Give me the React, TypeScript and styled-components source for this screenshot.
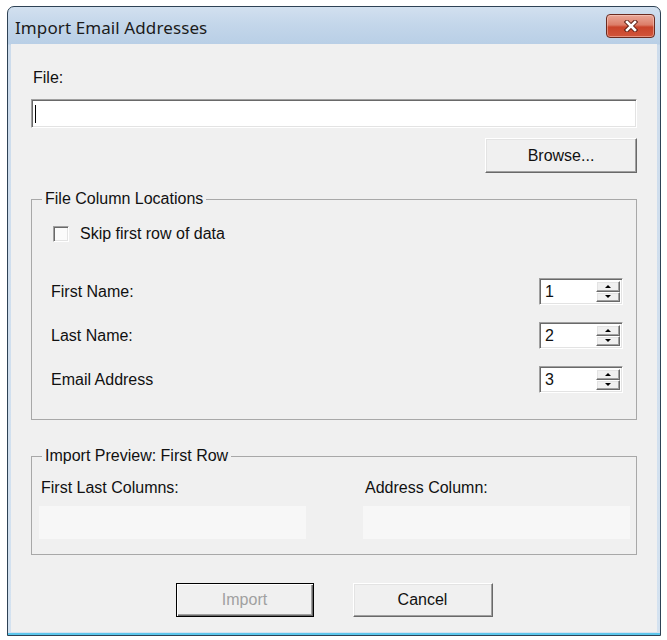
import React from "react";
import styled, { createGlobalStyle } from "styled-components";

const GlobalStyle = createGlobalStyle`
  html, body {
    margin: 0;
    padding: 0;
    background: #ffffff;
  }
  body {
    font-family: "Liberation Sans", Arial, sans-serif;
    color: #111111;
  }
`;

const fieldRows = [
  { label: "First Name:", value: "1" },
  { label: "Last Name:", value: "2" },
  { label: "Email Address", value: "3" },
];

const App = () => {
  return (
    <Page>
      <GlobalStyle />
      <Window>
        <TitleBar>
          <Title>Import Email Addresses</Title>
          <CloseButton>
            <svg width="16" height="12" viewBox="0 0 16 12">
              <path d="M4 2 L12 10 M12 2 L4 10" stroke="#5b1d12" strokeWidth="4.5" strokeLinecap="square" />
              <path d="M4 2 L12 10 M12 2 L4 10" stroke="#ffffff" strokeWidth="2.6" strokeLinecap="square" />
            </svg>
          </CloseButton>
        </TitleBar>
        <Client>
          <FileLabel>File:</FileLabel>
          <TextField>
            <Caret />
          </TextField>
          <BrowseButton>Browse...</BrowseButton>

          <GroupBox $top={16}>
            <Legend>File Column Locations</Legend>
            <GroupBody $pad="17px 13px 26px 19px">
              <CheckRow>
                <CheckBox />
                <span>Skip first row of data</span>
              </CheckRow>
              <FieldList>
                {fieldRows.map((row) => (
                  <FieldRow key={row.label}>
                    <span>{row.label}</span>
                    <SpinBox>
                      <SpinValue>{row.value}</SpinValue>
                      <SpinButtons>
                        <SpinButton>
                          <ArrowUp />
                        </SpinButton>
                        <SpinButton>
                          <ArrowDown />
                        </SpinButton>
                      </SpinButtons>
                    </SpinBox>
                  </FieldRow>
                ))}
              </FieldList>
            </GroupBody>
          </GroupBox>

          <GroupBox $top={26}>
            <Legend>Import Preview: First Row</Legend>
            <GroupBody $pad="12px 6px 15px 7px">
              <PreviewGrid>
                <PreviewColumn>
                  <PreviewLabel>First Last Columns:</PreviewLabel>
                  <PreviewBox />
                </PreviewColumn>
                <PreviewColumn>
                  <PreviewLabel>Address Column:</PreviewLabel>
                  <PreviewBox />
                </PreviewColumn>
              </PreviewGrid>
            </GroupBody>
          </GroupBox>

          <ButtonRow>
            <DialogButton $width={138} $default disabled>
              Import
            </DialogButton>
            <DialogButton $width={140}>Cancel</DialogButton>
          </ButtonRow>
        </Client>
      </Window>
    </Page>
  );
};

export default App;

const Page = styled.div`
  width: 667px;
  height: 640px;
  padding: 6px 0 0 7px;
  box-sizing: border-box;
`;

const Window = styled.div`
  width: 654px;
  height: 630px;
  box-sizing: border-box;
  display: flex;
  flex-direction: column;
  padding: 0 3px 3px 3px;
  border: 1px solid #2e4255;
  border-radius: 7px 7px 0 0;
  background: linear-gradient(#d2e0ef 0px, #c3d6ea 18px, #b9cfe6 37px, #cddcec 38px, #d4e2f0 100%);
  box-shadow: inset 0 -2px 0 #5cc6ec;
`;

const TitleBar = styled.div`
  height: 37px;
  display: flex;
  align-items: center;
  justify-content: space-between;
  padding: 0 2px 0 4px;
`;

const Title = styled.span`
  font-family: "Noto Sans", "Open Sans", sans-serif;
  font-size: 17px;
  letter-spacing: 0.1px;
  color: #1b1b1b;
  padding-top: 3px;
`;

const CloseButton = styled.div`
  width: 49px;
  height: 24px;
  box-sizing: border-box;
  display: flex;
  align-items: center;
  justify-content: center;
  border: 1px solid #6b2b20;
  border-radius: 4px;
  background: linear-gradient(#eaa899 0%, #dc7d68 45%, #c9432a 55%, #d1553b 100%);
  box-shadow: inset 0 0 0 1px rgba(255, 220, 210, 0.45);
`;

const Client = styled.div`
  flex: 1;
  display: flex;
  flex-direction: column;
  padding: 0 20px;
  background: #f0f0f0;
  font-size: 16px;
`;

const FileLabel = styled.div`
  margin-top: 24px;
  line-height: 20px;
  padding-left: 2px;
`;

const TextField = styled.div`
  margin-top: 11px;
  height: 29px;
  box-sizing: border-box;
  display: flex;
  align-items: center;
  padding-left: 3px;
  background: #ffffff;
  border-top: 1px solid #a0a0a0;
  border-left: 1px solid #a0a0a0;
  border-right: 1px solid #ffffff;
  border-bottom: 1px solid #ffffff;
  box-shadow: inset 1px 1px 0 #696969, inset -1px -1px 0 #e3e3e3;
`;

const Caret = styled.span`
  width: 1px;
  height: 18px;
  background: #000000;
`;

const raised = `
  box-sizing: border-box;
  background: #f0f0f0;
  border-top: 1px solid #ffffff;
  border-left: 1px solid #ffffff;
  border-right: 1px solid #696969;
  border-bottom: 1px solid #696969;
  box-shadow: inset -1px -1px 0 #a0a0a0, inset 1px 1px 0 #e3e3e3;
`;

const BrowseButton = styled.button`
  ${raised}
  align-self: flex-end;
  margin-top: 10px;
  width: 152px;
  height: 35px;
  padding: 0;
  font-family: "Liberation Sans", Arial, sans-serif;
  font-size: 16px;
  color: #111111;
`;

const GroupBox = styled.fieldset<{ $top: number }>`
  margin: ${(p) => p.$top}px 0 0 0;
  padding: 0;
  border: 1px solid #a8a8a8;
  min-width: 0;
`;

const Legend = styled.legend`
  margin-left: 10px;
  padding: 0 3px;
  line-height: 20px;
  font-size: 16px;
`;

const GroupBody = styled.div<{ $pad: string }>`
  padding: ${(p) => p.$pad};
`;

const CheckRow = styled.label`
  display: flex;
  align-items: center;
  gap: 11px;
  height: 16px;
  margin-left: 2px;
`;

const CheckBox = styled.span`
  width: 16px;
  height: 16px;
  box-sizing: border-box;
  background: #fbfbfb;
  border-top: 1px solid #a0a0a0;
  border-left: 1px solid #a0a0a0;
  border-right: 1px solid #ffffff;
  border-bottom: 1px solid #ffffff;
  box-shadow: inset 1px 1px 0 #696969, inset -1px -1px 0 #e3e3e3;
`;

const FieldList = styled.div`
  margin-top: 36px;
  display: flex;
  flex-direction: column;
  gap: 17px;
`;

const FieldRow = styled.div`
  height: 27px;
  display: flex;
  align-items: center;
  justify-content: space-between;
`;

const SpinBox = styled.div`
  width: 84px;
  height: 27px;
  box-sizing: border-box;
  display: flex;
  align-items: stretch;
  padding: 2px 2px 2px 0;
  background: #ffffff;
  border-top: 1px solid #a0a0a0;
  border-left: 1px solid #a0a0a0;
  border-right: 1px solid #ffffff;
  border-bottom: 1px solid #ffffff;
  box-shadow: inset 1px 1px 0 #696969, inset -1px -1px 0 #e3e3e3;
`;

const SpinValue = styled.span`
  flex: 1;
  display: flex;
  align-items: center;
  padding-left: 5px;
  font-size: 16px;
`;

const SpinButtons = styled.div`
  width: 24px;
  display: flex;
  flex-direction: column;
`;

const SpinButton = styled.div`
  ${raised}
  flex: 1;
  display: flex;
  align-items: center;
  justify-content: center;
`;

const ArrowUp = styled.span`
  width: 0;
  height: 0;
  border-left: 3px solid transparent;
  border-right: 3px solid transparent;
  border-bottom: 3px solid #000000;
`;

const ArrowDown = styled.span`
  width: 0;
  height: 0;
  border-left: 3px solid transparent;
  border-right: 3px solid transparent;
  border-top: 3px solid #000000;
`;

const PreviewGrid = styled.div`
  display: grid;
  grid-template-columns: 1fr 1fr;
  column-gap: 57px;
`;

const PreviewColumn = styled.div`
  display: flex;
  flex-direction: column;
  gap: 8px;
`;

const PreviewLabel = styled.span`
  line-height: 20px;
  padding-left: 2px;
`;

const PreviewBox = styled.div`
  height: 33px;
  background: #f7f7f7;
`;

const ButtonRow = styled.div`
  margin-top: 28px;
  display: flex;
  justify-content: center;
  gap: 39px;
`;

const DialogButton = styled.button<{ $width: number; $default?: boolean }>`
  ${raised}
  width: ${(p) => p.$width}px;
  height: 34px;
  padding: 0;
  font-family: "Liberation Sans", Arial, sans-serif;
  font-size: 16px;
  color: #111111;
  ${(p) =>
    p.$default &&
    `
    border: 1px solid #000000;
    box-shadow: inset 1px 1px 0 #ffffff, inset -1px -1px 0 #696969, inset -2px -2px 0 #a0a0a0;
  `}
  &:disabled {
    color: #a0a0a0;
  }
`;
